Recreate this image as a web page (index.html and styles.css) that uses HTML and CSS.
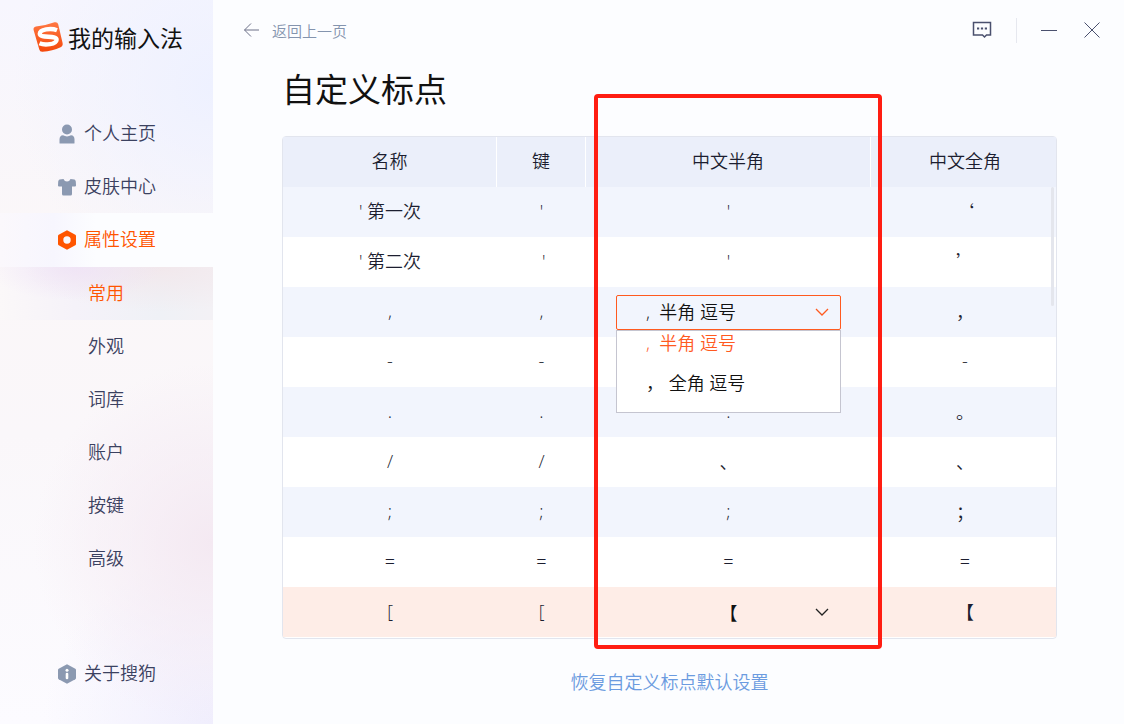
FILE: index.html
```html
<!DOCTYPE html>
<html lang="zh-CN">
<head>
    <meta charset="UTF-8">
    <meta name="viewport" content="width=device-width, initial-scale=1.0">
    <title>自定义标点</title>
    <link rel="stylesheet" href="styles.css">
</head>
<body>
    <aside class="sidebar">
        <div class="brand">
            <svg class="logo" viewBox="0 0 32 32" aria-hidden="true">
                <defs>
                    <linearGradient id="logoFill" x1="0" y1="0" x2="0" y2="1">
                        <stop offset="0" stop-color="#ff7843"/>
                        <stop offset="1" stop-color="#f4480b"/>
                    </linearGradient>
                </defs>
                <path d="M4 5.500Q14 4.500 22.500 1.300Q25.500 .6 26.200 3.200L30.600 22Q31.200 25 28.600 26.200Q20.500 30 10.500 30.700Q7.800 30.900 7.200 28.200L1.600 9Q1 6 4 5.500Z" fill="url(#logoFill)"/>
                <path d="M25 9.200C19 6.800 7.800 8.300 7.800 12.800C7.800 17.500 24.800 14 24.600 18.800C24.300 23.300 13 24.800 7.500 22.300" fill="none" stroke="#fff" stroke-width="4.400"/>
            </svg>
            <span>我的输入法</span>
        </div>
        <nav class="menu">
            <a href="#">
                <svg class="icon" viewBox="0 0 20 20"><circle cx="10" cy="5.500" r="5"/><path d="M2.500 19V15.500Q2.500 11.500 6 11.300Q10 13.500 14 11.300Q17.500 11.500 17.500 15.500V19Q17.500 19.500 17 19.500H3Q2.500 19.500 2.500 19Z"/></svg>
                个人主页
            </a>
            <a href="#">
                <svg class="icon" viewBox="0 0 20 20"><path d="M2.500 2.500L6.500 2Q7.500 4.500 10 4.500T13.500 2L17.500 2.500Q18.500 3 18.800 4.500L19 8.500Q19 9.500 18 9.500H15V17Q15 18.500 13.500 18.500H6.500Q5 18.500 5 17V9.500H2Q1 9.500 1 8.500L1.200 4.500Q1.500 3 2.500 2.500Z"/></svg>
                皮肤中心
            </a>
            <a href="#" class="active">
                <svg class="icon" viewBox="0 0 20 20"><path fill-rule="evenodd" d="M10 .2L18.300 4.800Q19 5.200 19 6V14Q19 14.800 18.300 15.200L10 19.800L1.700 15.200Q1 14.800 1 14V6Q1 5.200 1.700 4.800ZM10 6.300A3.700 3.700 0 1 0 10 13.700A3.700 3.700 0 1 0 10 6.300Z"/></svg>
                属性设置
            </a>
            <a href="#" class="sub current">常用</a>
            <a href="#" class="sub">外观</a>
            <a href="#" class="sub">词库</a>
            <a href="#" class="sub">账户</a>
            <a href="#" class="sub">按键</a>
            <a href="#" class="sub">高级</a>
            <a href="#" class="about">
                <svg class="icon" viewBox="0 0 20 20"><path d="M10 .2L18.300 4.800Q19 5.200 19 6V14Q19 14.800 18.300 15.200L10 19.800L1.700 15.200Q1 14.800 1 14V6Q1 5.200 1.700 4.800Z"/><circle cx="10" cy="6.200" r="1.500" fill="#fff"/><path d="M10 10V14" stroke="#fff" stroke-width="2.600" stroke-linecap="round"/></svg>
                关于搜狗
            </a>
        </nav>
    </aside>

    <main class="main">
        <header class="topbar">
            <a href="#" class="back">
                <svg width="17" height="16" viewBox="0 0 17 16"><path d="M16 8H1.500M8 1.500L1.500 8L8 14.500"/></svg>
                返回上一页
            </a>
            <div class="tools">
                <button type="button" aria-label="反馈"><svg width="20" height="18" viewBox="0 0 20 18"><path d="M1.500 1.500H18.500V14H14.500L12.500 16L10.500 14H1.500Z" fill="none" stroke-width="1.500"/><path d="M5 7.500H7.200M8.900 7.500H11.100M12.800 7.500H15" stroke-width="2.200"/></svg></button>
                <span class="divider"></span>
                <button type="button" aria-label="最小化"><svg width="16" height="16" viewBox="0 0 16 16"><path d="M0 8.500H16"/></svg></button>
                <button type="button" aria-label="关闭"><svg width="16" height="16" viewBox="0 0 16 16"><path d="M.5 .5L15.500 15.500M15.500 .5L.5 15.500"/></svg></button>
            </div>
        </header>

        <section class="content">
            <h1>自定义标点</h1>
            <div class="table-box">
                <table>
                    <colgroup>
                        <col class="col-name">
                        <col class="col-key">
                        <col class="col-half">
                        <col>
                    </colgroup>
                    <thead>
                        <tr><th>名称</th><th>键</th><th>中文半角</th><th>中文全角</th></tr>
                    </thead>
                    <tbody>
                        <tr><td>' 第一次</td><td>'</td><td>'</td><td class="full">‘</td></tr>
                        <tr><td>' 第二次</td><td>&nbsp;'</td><td>'</td><td class="full">’</td></tr>
                        <tr>
                            <td>,</td>
                            <td>,</td>
                            <td class="edit">
                                <div class="picker open">
                                    <select aria-label="逗号 中文半角">
                                        <option>,&nbsp; 半角 逗号</option>
                                        <option>， 全角 逗号</option>
                                    </select>
                                    <svg class="arrow" viewBox="0 0 14 8"><path d="M1 1L7 7L13 1"/></svg>
                                    <div class="options">
                                        <button type="button" class="selected">,&nbsp; 半角 逗号</button>
                                        <button type="button"><span class="full">，</span> 全角 逗号</button>
                                    </div>
                                </div>
                            </td>
                            <td class="full">，</td>
                        </tr>
                        <tr><td>-</td><td>-</td><td></td><td>-</td></tr>
                        <tr><td>.</td><td>.</td><td>.</td><td class="full">。</td></tr>
                        <tr><td>/</td><td>/</td><td class="full">、</td><td class="full">、</td></tr>
                        <tr><td>;</td><td>;</td><td>;</td><td class="full">；</td></tr>
                        <tr><td>=</td><td>=</td><td>=</td><td>=</td></tr>
                        <tr class="hover">
                            <td>[</td>
                            <td>[</td>
                            <td class="edit">
                                <div class="picker">
                                    <select class="full" aria-label="左方括号 中文半角">
                                        <option>【</option>
                                    </select>
                                    <svg class="arrow" viewBox="0 0 14 8"><path d="M1 1L7 7L13 1"/></svg>
                                </div>
                            </td>
                            <td class="full">【</td>
                        </tr>
                    </tbody>
                </table>
                <div class="scrollbar"></div>
                <div class="highlight"></div>
            </div>
            <a href="#" class="reset">恢复自定义标点默认设置</a>
        </section>
    </main>
</body>
</html>
```
FILE: styles.css
```css
* {
    box-sizing: border-box;
}

body {
    display: flex;
    min-height: 100vh;
    margin: 0;
    background-color: #fcfdff;
    color: #1c1e30;
    font-family: "Open Sans", "Noto Sans CJK SC", sans-serif;
    font-size: 18px;
    font-weight: 350;
}

a {
    color: inherit;
    text-decoration: none;
}

button, select {
    padding: 0;
    border: none;
    background: none;
    color: inherit;
    font: inherit;
    cursor: pointer;
}

.sidebar {
    display: flex;
    flex: none;
    flex-direction: column;
    width: 213px;
    background:
        radial-gradient(circle at 100% 12%, #eef1ff 0, rgba(238, 241, 255, 0) 200px),
        radial-gradient(circle at 100% 75%, #f4e9f2 0, rgba(244, 233, 242, 0) 180px),
        radial-gradient(circle at 100% 100%, #f0eefd 0, rgba(240, 238, 253, 0) 170px),
        linear-gradient(#f7f6fe, #fbf7f8 35%, #faf7fa 60%, #fcfbff);
}

.brand {
    display: flex;
    align-items: center;
    gap: 4px;
    height: 74px;
    padding-left: 32px;
    color: #111;
    font-size: 23px;
    font-weight: 400;
}

.logo {
    width: 32px;
    height: 32px;
}

.menu {
    display: flex;
    flex: 1;
    flex-direction: column;
    padding: 33px 0 24px;
    color: #3b4160;
}

.menu a {
    display: flex;
    align-items: center;
    gap: 7px;
    height: 53px;
    padding: 0 0 4px 57px;
}

.menu .icon {
    width: 20px;
    height: 20px;
    margin-top: 4px;
    fill: #8b99b1;
}

.menu .sub {
    padding-left: 88px;
}

.menu .active {
    height: 54px;
    background: linear-gradient(90deg, #fbf8fc, #f7f6fe 25%, #fcfdff 45%);
    color: #ff5500;
}

.menu .active .icon {
    fill: #ff5500;
}

.menu .current {
    background:
        radial-gradient(ellipse at 35% 0, rgba(238, 224, 246, .7), rgba(240, 230, 248, 0) 45%),
        radial-gradient(ellipse at 75% 0, #f2e8ec, rgba(242, 232, 236, 0) 60%),
        linear-gradient(90deg, #fbf8f9, #f5f2f9 35%, #eff1f6 75%, #f3f1f5);
    color: #ff5500;
}

.menu .about {
    margin-top: auto;
}

.main {
    display: flex;
    flex: 1;
    flex-direction: column;
}

.topbar {
    display: flex;
    align-items: center;
    justify-content: space-between;
    height: 60px;
    padding: 0 24px 0 30px;
}

.back {
    display: flex;
    align-items: center;
    gap: 12px;
    color: #8494ae;
    font-size: 15px;
}

.back svg {
    fill: none;
    stroke: #6c7088;
}

.tools {
    display: flex;
    align-items: center;
    gap: 24px;
}

.tools button {
    display: flex;
}

.tools button + button {
    margin-left: 3px;
}

.tools svg {
    stroke: #4a506e;
}

.divider {
    width: 1px;
    height: 25px;
    background-color: #e6e8ef;
}

.content {
    display: flex;
    flex-direction: column;
    padding: 0 67px 0 69px;
}

h1 {
    margin: 0;
    height: 76px;
    color: #111;
    font-size: 33px;
    font-weight: 400;
    line-height: 60px;
}

.table-box {
    position: relative;
    padding-bottom: 1px;
    border: 1px solid #e2e5ee;
    border-radius: 4px;
    background-color: #fff;
}

table {
    width: 100%;
    border-collapse: separate;
    border-spacing: 0;
    table-layout: fixed;
}

.col-name {
    width: 214px;
}

.col-key {
    width: 89px;
}

.col-half {
    width: 285px;
}

th, td {
    height: 50px;
    padding: 0 0 2px;
    line-height: 24px;
    text-align: center;
}

th {
    border-right: 1px solid #fff;
    background-color: #ebeffa;
    font-weight: 350;
}

th:last-child, td:last-child {
    padding-left: 3px;
    border-right: none;
}

td.edit {
    padding: 0;
}

tbody tr:nth-child(odd) {
    background-color: #f2f5fd;
}

tbody tr.hover {
    background-color: #feede7;
}

.full {
    font-family: "Noto Sans CJK SC", sans-serif;
}

.picker {
    position: relative;
    display: flex;
    align-items: center;
    width: 225px;
    height: 35px;
    margin: 0 auto;
    color: #111;
}

.picker select {
    width: 100%;
    height: 35px;
    padding-bottom: 1px;
    border: 1px solid transparent;
    border-radius: 2px;
    appearance: none;
    text-align-last: center;
}

.picker.open select {
    padding-left: 29px;
    border-color: #ff5a1f;
    text-align-last: left;
}

.arrow {
    position: absolute;
    right: 12px;
    width: 14px;
    height: 8px;
    fill: none;
    stroke: #222;
    stroke-width: 1.3;
    pointer-events: none;
}

.picker.open .arrow {
    stroke: #ff5a1f;
}

.options {
    position: absolute;
    z-index: 1;
    top: 35px;
    left: 0;
    display: flex;
    flex-direction: column;
    gap: 15px;
    width: 100%;
    padding-bottom: 17px;
    border: 1px solid #c5c5d0;
    background-color: #fff;
}

.options button {
    padding-left: 29px;
    line-height: 24px;
    text-align: left;
}

.options .selected {
    color: #ff5a1f;
}

.scrollbar {
    position: absolute;
    top: 50px;
    right: 2px;
    width: 3px;
    height: 119px;
    border-radius: 2px;
    background-color: #e4e6ed;
}

/* marks the half-width column */
.highlight {
    position: absolute;
    z-index: 2;
    top: -43px;
    bottom: -11px;
    left: 311px;
    width: 288px;
    border: 4px solid #ff1d12;
    border-radius: 4px;
    pointer-events: none;
}

.reset {
    align-self: center;
    margin-top: 29px;
    color: #6b9be0;
}
```
